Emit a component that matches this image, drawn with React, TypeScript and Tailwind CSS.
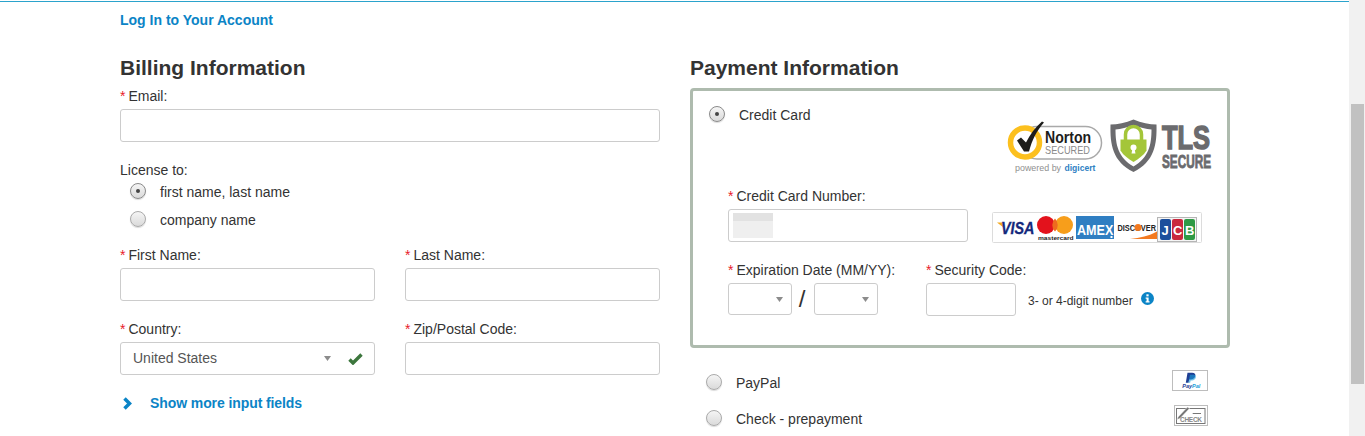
const inputCls = 'block h-[33px] rounded-[3px] border border-[#ccc] bg-white';

function Label({ text, star = true }: { text: string; star?: boolean }) {
  return (
    <div className="h-5 text-[14px] leading-5 text-[#333]">
      {star && <span className="mr-[3px] text-[#e8202a]">*</span>}
      {text}
    </div>
  );
}

function Radio({ checked }: { checked?: boolean }) {
  return (
    <span
      className={`flex h-4 w-4 shrink-0 items-center justify-center rounded-full border bg-gradient-to-b from-[#f5f5f5] to-[#dadada] shadow-[0_1px_1px_rgba(0,0,0,0.15)] ${
        checked ? 'border-[#8a8a8a]' : 'border-[#aaa]'
      }`}
    >
      {checked && <span className="h-1 w-1 rounded-full bg-[#444]" />}
    </span>
  );
}

function Arrow({ className }: { className?: string }) {
  return (
    <svg width="7" height="5" viewBox="0 0 7 5" className={`shrink-0 ${className ?? ''}`}>
      <path d="M0 0h7L3.5 5z" fill="#8c8c8c" />
    </svg>
  );
}

function NortonLogo() {
  return (
    <svg width="96" height="57" viewBox="1008 120 96 57" className="block overflow-visible">
      <rect x="1022" y="127.5" width="80.5" height="32.5" rx="16" fill="#fff" stroke="#a9a9a9" strokeWidth="1.5" />
      <circle cx="1026" cy="143.5" r="14.5" fill="#fff" stroke="#fcc01e" strokeWidth="5.5" />
      <path d="M1018 141.500l4-3 5 5c4-8 9-15 16-21l2 1c-7 8-12 17-15 29h-5z" fill="#1d1d1b" />
      <text transform="translate(1046 143.500) scale(0.88 1)" fontFamily="Liberation Sans, sans-serif" fontWeight="700" fontSize="16" fill="#1d1d1b">Norton</text>
      <text transform="translate(1046 154.500) scale(0.92 1)" fontFamily="Liberation Sans, sans-serif" fontSize="10" fill="#8a8a8a">SECURED</text>
      <text transform="translate(1016 171.500) scale(1.05 1)" fontFamily="Liberation Sans, sans-serif" fontSize="8.500" fill="#8f8f8f">powered by</text>
      <text transform="translate(1065.500 171.500) scale(0.95 1)" fontFamily="Liberation Sans, sans-serif" fontWeight="700" fontSize="9" fill="#2f7fc3">digicert</text>
    </svg>
  );
}

function TlsLogo() {
  return (
    <svg width="102" height="54" viewBox="1111 119 102 54" className="block overflow-visible">
      <path d="M1134.500 119.500c8 3.500 16 5 23 5 .5 20-2 37-23 47.500-21-10.500-23.500-27.500-23-47.500 7 0 15-1.500 23-5z" fill="#6b6b6e" />
      <path d="M1134.500 125c6.500 2.500 12.500 4 18 4.500 0 15-2.500 28-18 37-15.500-9-18-22-18-37 5.500-.5 11.500-2 18-4.500z" fill="#fff" />
      <path d="M1126.500 140v-5.500a8 8 0 0 1 16 0v5.500" fill="none" stroke="#a4c639" strokeWidth="3.500" />
      <path d="M1121.500 139.500h26v11c-3 5-7.500 8-13 11.500-5.500-3.500-10-6.500-13-11.500z" fill="#a4c639" />
      <circle cx="1134.500" cy="147.500" r="3" fill="#fff" />
      <path d="M1133.500 148.500h2l1 5h-4z" fill="#fff" />
      <text transform="translate(1163 149) scale(0.77 1)" fontFamily="Liberation Sans, sans-serif" fontWeight="700" fontSize="33" fill="#6b6b6e" stroke="#6b6b6e" strokeWidth="1.500">TLS</text>
      <text transform="translate(1163 168) scale(0.655 1)" fontFamily="Liberation Sans, sans-serif" fontWeight="700" fontSize="18" fill="#6b6b6e" stroke="#6b6b6e" strokeWidth="0.800">SECURE</text>
    </svg>
  );
}

function CardsBadge() {
  return (
    <svg width="210" height="31" viewBox="992 212 210 31" className="block">
      <rect x="992.500" y="212.500" width="209" height="30" rx="1" fill="#fff" stroke="#dcdcdc" />
      <path d="M997 222.500h5l1.500 5z" fill="#f2a81d" />
      <text transform="translate(1001 234) scale(0.87 1)" fontFamily="Liberation Sans, sans-serif" fontWeight="700" fontStyle="italic" fontSize="16.500" fill="#14297c" stroke="#14297c" strokeWidth="0.300">VISA</text>
      <circle cx="1046" cy="225" r="9" fill="#e3121c" />
      <circle cx="1064" cy="225" r="9" fill="#f79e1b" />
      <path d="M1055 218.500a9 9 0 0 1 0 13a9 9 0 0 1 0-13z" fill="#ee6a1f" />
      <text transform="translate(1038 239.500) scale(1.2 1)" fontFamily="Liberation Sans, sans-serif" fontWeight="700" fontSize="5.500" fill="#222">mastercard</text>
      <rect x="1076" y="216" width="38" height="23" fill="#2f7ec2" />
      <text transform="translate(1077 235) scale(0.9 1)" fontFamily="Liberation Sans, sans-serif" fontWeight="700" fontSize="14" fill="#fff">AMEX</text>
      <rect x="1110.500" y="236" width="2" height="2" fill="#fff" />
      <text transform="translate(1117.500 231) scale(0.776 1)" fontFamily="Liberation Sans, sans-serif" fontWeight="700" fontSize="9.500" fill="#222">DISCOVER</text>
      <circle cx="1138" cy="227.500" r="3.500" fill="#f37a20" />
      <path d="M1130 239c10-1 19-3 27-7.500v7.500z" fill="#f37a20" />
      <rect x="1157.500" y="217.500" width="39" height="24" fill="#f5f5f5" stroke="#b5b5b5" />
      <rect x="1160" y="219" width="11" height="21" rx="2" fill="#1c4f9c" />
      <rect x="1172" y="219" width="11" height="21" rx="2" fill="#c9283e" />
      <rect x="1184" y="219" width="11" height="21" rx="2" fill="#2f9a45" />
      <text x="1161.500" y="235" fontFamily="Liberation Sans, sans-serif" fontWeight="700" fontSize="13" fill="#fff">J</text>
      <text x="1173" y="235" fontFamily="Liberation Sans, sans-serif" fontWeight="700" fontSize="13" fill="#fff">C</text>
      <text x="1185" y="235" fontFamily="Liberation Sans, sans-serif" fontWeight="700" fontSize="13" fill="#fff">B</text>
    </svg>
  );
}

function PaypalBadge() {
  return (
    <svg width="36" height="21" viewBox="0 0 36 21" className="block">
      <rect x="0.500" y="0.500" width="35" height="20" fill="#fff" stroke="#bdbdbd" />
      <path d="M15.500 2.700h4.500c2.800 0 3.800 1.400 3.300 3.300-.5 2.400-2.400 3.400-4.800 3.400h-1.300l-.7 3.300h-2.700z" fill="#1f3f94" />
      <path d="M18 4.700h3.500c1.900 0 2.800 1 2.300 2.900-.4 1.900-1.900 2.800-3.800 2.800h-1.300l-.6 2.300h-1.700z" fill="#1b9cd8" opacity="0.6" />
      <text x="10.300" y="18" fontFamily="Liberation Sans, sans-serif" fontWeight="700" fontStyle="italic" fontSize="5.500" fill="#1f3f94">Pay<tspan fill="#1b9cd8">Pal</tspan></text>
    </svg>
  );
}

function CheckBadge() {
  return (
    <svg width="34" height="21" viewBox="0 0 34 21" className="block">
      <rect x="0.500" y="0.500" width="33" height="20" fill="#fff" stroke="#bdbdbd" />
      <rect x="2.500" y="3.500" width="28.500" height="15" fill="#fff" stroke="#777" />
      <path d="M4 12l9.500-10 2 1.500-9.500 10-3 1z" fill="#777" stroke="#fff" strokeWidth="0.500" />
      <path d="M18.700 8.500h8.300" stroke="#777" />
      <text x="6" y="17" fontFamily="Liberation Sans, sans-serif" fontWeight="700" fontSize="6.500" textLength="22" lengthAdjust="spacing" fill="#888">CHECK</text>
    </svg>
  );
}

export default function App() {
  return (
    <div className="flex h-[436px] overflow-hidden bg-white font-['Liberation_Sans',Arial,sans-serif] text-[14px] text-[#333]">
      <main className="w-[1349px] shrink-0 pt-px">
        <div className="h-px bg-[#2ba3cc]" />
        <a className="mt-2 ml-[120px] block h-5 text-[14px] leading-5 font-bold text-[#0b84c6]">Log In to Your Account</a>

        <div className="mt-[23px] ml-[120px] flex w-[1110px] gap-[30px]">
          {/* billing */}
          <section className="w-[540px]">
            <h2 className="h-[30px] text-[21px] leading-[30px] font-bold text-[#333]">Billing Information</h2>
            <div className="mt-[3px]">
              <Label text="Email:" />
              <div className={`${inputCls} mt-[3px] w-full`} />
            </div>

            <div className="mt-[18px]">
              <Label text="License to:" star={false} />
              <div className="flex flex-col gap-[6px] pl-[10px]">
                <div className="flex h-[22px] items-center gap-[14px]">
                  <Radio checked />
                  <span className="pt-[2px]">first name, last name</span>
                </div>
                <div className="flex h-[22px] items-center gap-[14px]">
                  <Radio />
                  <span className="pt-[2px]">company name</span>
                </div>
              </div>
            </div>

            <div className="mt-[15px] grid grid-cols-[255px_255px] gap-x-[30px] gap-y-[18px]">
              <div>
                <Label text="First Name:" />
                <div className={`${inputCls} mt-[3px]`} />
              </div>
              <div>
                <Label text="Last Name:" />
                <div className={`${inputCls} mt-[3px]`} />
              </div>
              <div>
                <Label text="Country:" />
                <div className={`${inputCls} mt-[3px] flex items-center pr-[11px] pl-3 text-[#555]`}>
                  <span className="flex-1">United States</span>
                  <Arrow />
                  <svg width="15" height="12" viewBox="0 0 15 12" className="ml-[17px]">
                    <path d="M1.500 6.500l3.500 3.500 8.500-8.500" fill="none" stroke="#3c763d" strokeWidth="3.400" />
                  </svg>
                </div>
              </div>
              <div>
                <Label text="Zip/Postal Code:" />
                <div className={`${inputCls} mt-[3px]`} />
              </div>
            </div>

            <a className="mt-[18px] flex h-5 items-center pl-[2px] font-bold tracking-[-0.09px] text-[#0b84c6]">
              <svg width="11" height="13" viewBox="0 0 11 13">
                <path d="M2.500 1.500l5 5-5 5" fill="none" stroke="#0b84c6" strokeWidth="3.500" />
              </svg>
              <span className="ml-[17px]">Show more input fields</span>
            </a>
          </section>

          {/* payment */}
          <section className="w-[540px]">
            <h2 className="h-[30px] text-[21px] leading-[30px] font-bold text-[#333]">Payment Information</h2>
            <div className="mt-[5px] h-[260px] rounded-[4px] border-[3px] border-[#aebbae]">
              <div className="flex h-[95px] justify-between pr-[15px] pl-4">
                <div className="mt-[13px] flex h-5 items-center gap-[14px]">
                  <Radio checked />
                  <span className="pt-[2px]">Credit Card</span>
                </div>
                <div className="mt-[28px] flex items-start gap-[7px]">
                  <NortonLogo />
                  <TlsLogo />
                </div>
              </div>

              <div className="ml-[35px] flex gap-6">
                <div className="w-[240px]">
                  <Label text="Credit Card Number:" />
                  <div className={`${inputCls} mt-[3px] p-[3px_0_0_4px]`}>
                    <div className="h-[25px] w-10 bg-[#efefef]">
                      <div className="h-2 bg-[#e2e2e2]" />
                    </div>
                  </div>
                </div>
                <div className="mt-[26px]">
                  <CardsBadge />
                </div>
              </div>

              <div className="mt-[17px] ml-[35px] flex">
                <div className="w-[198px]">
                  <Label text="Expiration Date (MM/YY):" />
                  <div className="mt-[3px] flex items-center">
                    <div className="flex h-8 w-16 items-center justify-end rounded-[3px] border border-[#ccc] pr-[8px]">
                      <Arrow />
                    </div>
                    <span className="w-[22px] pr-[2px] text-center text-[24px] leading-none text-[#333]">/</span>
                    <div className="flex h-8 w-16 items-center justify-end rounded-[3px] border border-[#ccc] pr-[8px]">
                      <Arrow />
                    </div>
                  </div>
                </div>
                <div>
                  <Label text="Security Code:" />
                  <div className="mt-[3px] flex items-center">
                    <div className={`${inputCls} w-[90px]`} />
                    <span className="ml-3 pt-[2px] text-[12px]">3- or 4-digit number</span>
                    <svg width="13" height="13" viewBox="0 0 14 14" className="mb-[3px] ml-2">
                      <circle cx="7" cy="7" r="7" fill="#0b84c6" />
                      <rect x="5.800" y="2.500" width="2.400" height="2.200" fill="#fff" />
                      <path d="M5 5.800h3.200v4.200h1v1.400H5V10h1V7.200H5z" fill="#fff" />
                    </svg>
                  </div>
                </div>
              </div>
            </div>

            <div className="mt-[23px] flex flex-col gap-[14px] pr-[22px] pl-4">
              <div className="flex h-[22px] items-start justify-between">
                <div className="flex h-[22px] items-center gap-[14px]">
                  <Radio />
                  <span className="pt-[2px]">PayPal</span>
                </div>
                <div className="-mt-px">
                  <PaypalBadge />
                </div>
              </div>
              <div className="flex h-[22px] items-start justify-between">
                <div className="flex h-[22px] items-center gap-[14px]">
                  <Radio />
                  <span className="pt-[2px]">Check - prepayment</span>
                </div>
                <div className="-mt-[2px]">
                  <CheckBadge />
                </div>
              </div>
            </div>
          </section>
        </div>
      </main>
      <aside className="w-4 shrink-0 bg-[#f1f1f1] pt-[104px] pl-[2px]">
        <div className="h-[280px] w-[13px] bg-[#c1c1c1]" />
      </aside>
    </div>
  );
}
